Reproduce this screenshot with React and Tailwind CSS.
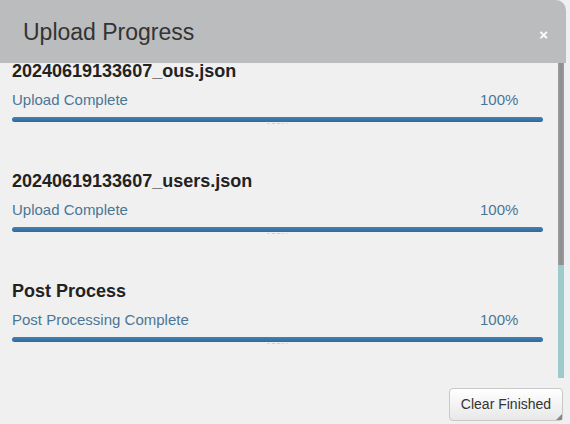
import React from "react";

const items = [
  { name: "20240619133607_ous.json", status: "Upload Complete" },
  { name: "20240619133607_users.json", status: "Upload Complete" },
  { name: "Post Process", status: "Post Processing Complete" },
];

function Item({ name, status }) {
  return (
    <div className="flex flex-col mb-[49px]">
      <div className="text-[18px] leading-[16px] font-bold text-[#222]">{name}</div>
      <div className="mt-[11px] flex w-[531px] text-[15px] leading-[20px] text-[#4a7696]">
        <div className="flex-1">{status}</div>
        <div className="w-[63px]">100%</div>
      </div>
      <div className="mt-[7px] w-[531px] h-[5px] rounded-[3px] bg-gradient-to-b from-[#4580b6] to-[#2f6a9c]" />
      <div className="w-[531px] h-[2px] overflow-hidden flex justify-center">
        <span className="text-[9px] leading-[9px] text-[#b8c8d6]">100%</span>
      </div>
    </div>
  );
}

export default function App() {
  return (
    <div
      className="w-[570px] h-[424px] bg-[#eef0f3] flex overflow-hidden"
      style={{ fontFamily: '"Liberation Sans", Arial, sans-serif' }}
    >
      <div className="w-[566px] h-full flex flex-col bg-[#f0f0f0]">
        <div className="h-[63px] shrink-0 bg-[#bbbcbd] rounded-tr-[10px] flex items-center justify-between pl-[23px] pr-[18px]">
          <div className="text-[23px] text-[#333] leading-none mt-[2px]">Upload Progress</div>
          <div className="text-[15px] font-bold text-white leading-none mt-[5px]">×</div>
        </div>
        <div className="h-[315px] shrink-0 flex">
          <div className="flex-1 overflow-hidden pl-[12px]">
            {items.map((it) => (
              <Item key={it.name} {...it} />
            ))}
          </div>
          <div className="w-[6px] flex flex-col">
            <div className="h-[202px] bg-gradient-to-r from-[#9a9c9d] via-[#8a8c8d] to-[#9a9c9d]" />
            <div className="flex-1 bg-[#9dcbcc]" />
          </div>
          <div className="w-[2px]" />
        </div>
        <div className="flex-1 flex justify-end items-start pt-[10px] pr-[3px]">
          <button className="relative h-[33px] w-[114px] rounded-[4px] border border-[#c8c8c8] bg-gradient-to-b from-[#ffffff] to-[#e8e8e8] text-[14px] text-[#333] flex items-center justify-center">
            Clear Finished
            <span className="absolute right-0 bottom-0 w-0 h-0 border-l-[6px] border-l-transparent border-b-[6px] border-b-[#888]" />
          </button>
        </div>
      </div>
    </div>
  );
}
